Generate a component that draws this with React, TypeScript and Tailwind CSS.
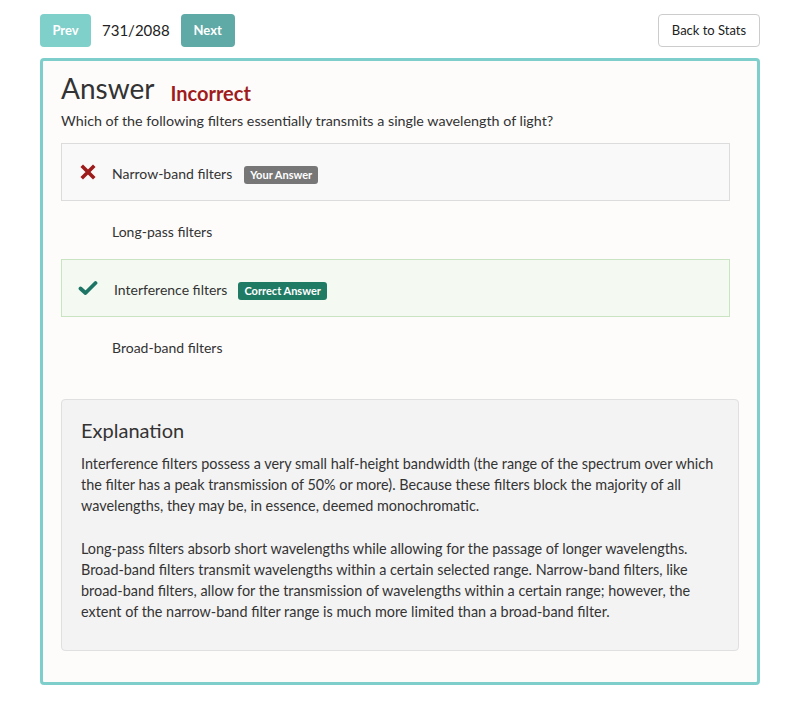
import React from 'react';

const options = [
  { text: 'Narrow-band filters', state: 'wrong' },
  { text: 'Long-pass filters', state: 'none' },
  { text: 'Interference filters', state: 'correct' },
  { text: 'Broad-band filters', state: 'none' },
];

const XIcon = () => (
  <svg width="16" height="16" viewBox="0 0 16 16">
    <path d="M3 3 L13 13 M13 3 L3 13" stroke="#9e1b1b" strokeWidth="3.6" strokeLinecap="square" />
  </svg>
);

const CheckIcon = () => (
  <svg width="20" height="16" viewBox="0 0 20 16">
    <path d="M2.5 8.5 L7.5 13 L17.5 3" fill="none" stroke="#1c7565" strokeWidth="3.8" strokeLinecap="round" strokeLinejoin="round" />
  </svg>
);

const App = () => {
  return (
    <div className="min-h-[708px] bg-white text-[#333] font-['Lato','Open_Sans',sans-serif]">
      <div className="w-[720px] mx-auto pt-[14px]">
        {/* Top nav */}
        <div className="flex items-center justify-between h-[33px]">
          <div className="flex items-center">
            <button className="w-[51px] h-[33px] rounded bg-[#7fcfcb] text-white text-[13px] font-bold">
              Prev
            </button>
            <span className="ml-[11px] mr-[11px] text-[15px] text-[#222]">731/2088</span>
            <button className="w-[54px] h-[33px] rounded bg-[#5fa9a6] text-white text-[13px] font-bold">
              Next
            </button>
          </div>
          <button className="w-[102px] h-[33px] rounded border border-[#cccccc] bg-white text-[13px] text-[#222]">
            Back to Stats
          </button>
        </div>

        {/* Answer card */}
        <div className="mt-[11px] border-[3px] border-[#7ecfcc] rounded bg-[#fdfcfb] pl-[18px] pr-[18px] pt-[10px] pb-[31px] h-[627px]">
          <div className="flex items-end">
            <h1 className="text-[28px] leading-[34px] text-[#333]">Answer</h1>
            <span className="ml-[16px] mb-[-3px] text-[20px] font-bold text-[#a01c1c]">Incorrect</span>
          </div>
          <p className="mt-[6px] text-[14.3px] leading-[20px]">
            Which of the following filters essentially transmits a single wavelength of light?
          </p>

          <div className="mt-[12px] mr-[9px]">
            {options.map((o, i) => (
              <div
                key={i}
                className={
                  o.state === 'wrong'
                    ? 'flex items-center h-[58px] border border-[#dcdcdc] bg-[#f9f9f9]'
                    : o.state === 'correct'
                    ? 'flex items-center h-[58px] border border-[#c9e4c1] bg-[#f4faf2]'
                    : 'flex items-center h-[58px] border border-transparent'
                }
              >
                <div className="w-[50px] flex justify-center pl-[2px]">
                  {o.state === 'wrong' && <XIcon />}
                  {o.state === 'correct' && <CheckIcon />}
                </div>
                <span className={o.state === 'correct' ? 'text-[14px] ml-[2px] pt-[2px]' : 'text-[14px] pt-[2px]'}>
                  {o.text}
                </span>
                {o.state === 'wrong' && (
                  <span className="ml-[12px] mt-[5px] px-[6px] h-[18px] leading-[18px] rounded-[3px] bg-[#777777] text-white text-[11px] font-bold">
                    Your Answer
                  </span>
                )}
                {o.state === 'correct' && (
                  <span className="ml-[11px] mt-[5px] px-[6px] h-[18px] leading-[18px] rounded-[3px] bg-[#1f7b64] text-white text-[11px] font-bold">
                    Correct Answer
                  </span>
                )}
              </div>
            ))}
          </div>

          {/* Explanation */}
          <div className="mt-[24px] border border-[#e0e0e0] rounded bg-[#f3f3f3] px-[19px] pt-[16px] pb-[30px] h-[252px]">
            <h2 className="text-[20px] leading-[28px] text-[#333]">Explanation</h2>
            <p className="mt-[9px] text-[14.4px] leading-[21px]">
              Interference filters possess a very small half-height bandwidth (the range of the spectrum over which
              <br />
              the filter has a peak transmission of 50% or more). Because these filters block the majority of all
              <br />
              wavelengths, they may be, in essence, deemed monochromatic.
            </p>
            <p className="mt-[22px] text-[14.4px] leading-[21px]">
              Long-pass filters absorb short wavelengths while allowing for the passage of longer wavelengths.
              <br />
              Broad-band filters transmit wavelengths within a certain selected range. Narrow-band filters, like
              <br />
              broad-band filters, allow for the transmission of wavelengths within a certain range; however, the
              <br />
              extent of the narrow-band filter range is much more limited than a broad-band filter.
            </p>
          </div>
        </div>
      </div>
    </div>
  );
};

export default App;
